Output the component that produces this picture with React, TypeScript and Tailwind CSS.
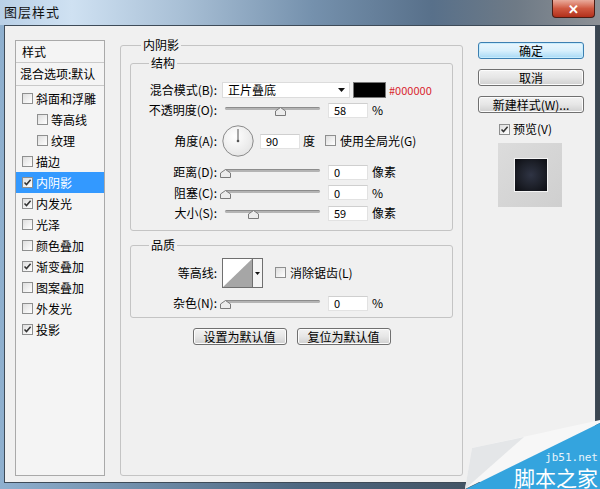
import type { ReactNode } from 'react';

const items = [
  { t: '斜面和浮雕' },
  { t: '等高线', indent: true },
  { t: '纹理', indent: true },
  { t: '描边' },
  { t: '内阴影', on: true, sel: true },
  { t: '内发光', on: true },
  { t: '光泽' },
  { t: '颜色叠加' },
  { t: '渐变叠加', on: true },
  { t: '图案叠加' },
  { t: '外发光' },
  { t: '投影', on: true },
];

function Check({ on }: { on?: boolean }) {
  return (
    <span className="inline-flex h-[11px] w-[11px] shrink-0 items-center justify-center border border-[#8e8f8f] bg-gradient-to-br from-[#dedede] to-white">
      {on && (
        <svg width="9" height="9" viewBox="0 0 9 9">
          <path d="M1.5 4.5 L3.5 6.6 L7.6 1.8" fill="none" stroke="#333" strokeWidth="1.5" />
        </svg>
      )}
    </span>
  );
}

function Label({ children }: { children: ReactNode }) {
  return <span className="w-[86px] shrink-0 text-right">{children}</span>;
}

function NumBox({ v }: { v: string }) {
  return (
    <span className="flex h-[15px] w-[40px] shrink-0 items-center border border-[#e2e2e2] border-t-[#cfcfcf] bg-white pl-[5px] text-[11px]">
      {v}
    </span>
  );
}

function Slider({ pos }: { pos: number }) {
  return (
    <div className="relative ml-[8px] mr-[8px] h-[20px] w-[95px] shrink-0">
      <div className="mt-[7px] h-[3px] rounded-full border-t border-[#8c8c8c] bg-[#b4b4b4]" />
      <svg className="absolute top-[7px]" style={{ left: pos - 5 }} width="11" height="9" viewBox="0 0 11 9">
        <path d="M5.5 0.5 L10.5 4 L10.5 8.5 L0.5 8.5 L0.5 4 Z" fill="#ececec" stroke="#7a7a7a" />
      </svg>
    </div>
  );
}

function SliderRow({ label, pos, v, unit, h }: { label: string; pos: number; v: string; unit: string; h: string }) {
  return (
    <div className={`flex items-center ${h}`}>
      <Label>{label}</Label>
      <Slider pos={pos} />
      <NumBox v={v} />
      <span className="ml-[4px]">{unit}</span>
    </div>
  );
}

function Btn({ children, primary, className }: { children: ReactNode; primary?: boolean; className?: string }) {
  return (
    <div
      className={`flex h-[17px] items-center justify-center rounded-[3px] border text-[12px] leading-none ${
        primary
          ? 'border-[#3c7fb1] bg-gradient-to-b from-[#eaf6fd] via-[#d9f0fc] to-[#a7d9f5] shadow-[inset_0_0_0_1px_#c6ecfd]'
          : 'border-[#707070] bg-gradient-to-b from-[#f2f2f2] via-[#e6e6e6] to-[#d0d0d0] shadow-[inset_0_0_0_1px_#fcfcfc]'
      } ${className ?? ''}`}
    >
      {children}
    </div>
  );
}

export default function App() {
  return (
    <div className="relative flex h-[489px] w-[600px] flex-col overflow-hidden bg-gradient-to-r from-[#8fb0cf] via-[#4d6780] to-[#3a4550] font-['Noto_Sans_CJK_SC',sans-serif] text-[12px] leading-[16px] text-black">
      {/* title bar */}
      <div className="flex h-[25px] shrink-0 items-start justify-between bg-[linear-gradient(90deg,#b9d0e7_0%,#cfe1f2_12%,#a9c0d6_30%,#7591ad_52%,#58708a_72%,#6e7a86_86%,#8d9196_100%)] pl-[4px] pr-[5px]">
        <span className="mt-[4px] text-[13px] tracking-[1px] text-[#111]">图层样式</span>
        <div className="flex h-[18px] w-[43px] items-center justify-center rounded-b-[4px] border border-t-0 border-[#4a1c14] bg-gradient-to-b from-[#e9ab9c] via-[#cf5840] to-[#b22f1a] text-[13px] font-bold leading-none text-white">
          ✕
        </div>
      </div>

      {/* client area */}
      <div className="mx-[4px] h-[458px] shrink-0 border border-[#3e4b58] bg-[#f0f0f0]">
        <div className="flex pl-[10px] pt-[11px]">
          {/* style list */}
          <div className="mt-[3px] h-[436px] w-[90px] shrink-0 border border-[#a9a9a9] bg-[#f4f4f4]">
            <div className="flex h-[22px] items-center border-b border-[#c9c9c9] pl-[6px]">样式</div>
            <div className="flex h-[23px] items-center whitespace-nowrap border-b border-[#c9c9c9] pl-[4px]">混合选项:默认</div>
            <div className="pt-[2px]">
              {items.map((it) => (
                <div
                  key={it.t}
                  className={`flex h-[21px] items-center gap-[3px] ${it.indent ? 'pl-[21px]' : 'pl-[6px]'} ${
                    it.sel ? 'bg-[#3399ff] text-white' : ''
                  }`}
                >
                  <Check on={it.on} />
                  <span>{it.t}</span>
                </div>
              ))}
            </div>
          </div>

          {/* main group */}
          <fieldset className="ml-[15px] h-[439px] w-[343px] shrink-0 rounded-[3px] border border-[#c4c4c4]">
            <legend className="ml-[20px] px-[2px] leading-[16px]">内阴影</legend>
            <div className="pl-[9px]">
              <fieldset className="mt-[2px] h-[176px] w-[323px] rounded-[3px] border border-[#c4c4c4]">
                <legend className="ml-[18px] px-[2px] leading-[16px]">结构</legend>
                <div className="pt-[9px]">
                  <div className="flex h-[20px] items-center">
                    <Label>混合模式(B):</Label>
                    <div className="ml-[5px] flex h-[16px] w-[128px] items-center justify-between border border-[#dcdcdc] bg-white pl-[5px] pr-[4px]">
                      <span>正片叠底</span>
                      <svg width="7" height="4" viewBox="0 0 7 4">
                        <path d="M0 0 L7 0 L3.5 4 Z" fill="#111" />
                      </svg>
                    </div>
                    <span className="ml-[3px] h-[16px] w-[33px] border border-[#777] bg-black" />
                    <span className="ml-[3px] text-[11px] text-[#d9262f]">#000000</span>
                  </div>
                  <SliderRow label="不透明度(O):" pos={55} v="58" unit="%" h="h-[20px]" />
                  <div className="flex h-[42px] items-center">
                    <Label>角度(A):</Label>
                    <svg className="ml-[5px] shrink-0" width="32" height="32" viewBox="0 0 32 32">
                      <defs>
                        <radialGradient id="dial" cx="0.4" cy="0.35" r="0.7">
                          <stop offset="0" stopColor="#ffffff" />
                          <stop offset="1" stopColor="#e4e4e4" />
                        </radialGradient>
                      </defs>
                      <circle cx="16" cy="16" r="15.2" fill="url(#dial)" stroke="#8a8a8a" />
                      <line x1="16" y1="16" x2="16" y2="4" stroke="#555" strokeWidth="1" />
                      <circle cx="16" cy="16" r="1.3" fill="#555" />
                    </svg>
                    <span className="ml-[6px]">
                      <NumBox v="90" />
                    </span>
                    <span className="ml-[3px]">度</span>
                    <span className="ml-[10px]">
                      <Check />
                    </span>
                    <span className="ml-[4px]">使用全局光(G)</span>
                  </div>
                  <SliderRow label="距离(D):" pos={0} v="0" unit="像素" h="h-[20px]" />
                  <SliderRow label="阻塞(C):" pos={0} v="0" unit="%" h="h-[21px]" />
                  <SliderRow label="大小(S):" pos={28} v="59" unit="像素" h="h-[20px]" />
                </div>
              </fieldset>

              <fieldset className="mt-[6px] h-[81px] w-[323px] rounded-[3px] border border-[#c4c4c4]">
                <legend className="ml-[18px] px-[2px] leading-[16px]">品质</legend>
                <div className="mt-[5px] flex h-[30px] items-center">
                  <Label>等高线:</Label>
                  <div className="ml-[5px] flex h-[30px] w-[41px] border border-[#6f6f6f] bg-white">
                    <svg width="29" height="28" viewBox="0 0 29 28">
                      <path d="M0 28 L29 0 L29 28 Z" fill="#a6a6a6" />
                    </svg>
                    <div className="flex w-[10px] items-center justify-center border-l border-[#6f6f6f] bg-[#f4f4f4]">
                      <svg width="5" height="3" viewBox="0 0 5 3">
                        <path d="M0 0 L5 0 L2.5 3 Z" fill="#111" />
                      </svg>
                    </div>
                  </div>
                  <span className="ml-[12px]">
                    <Check />
                  </span>
                  <span className="ml-[4px]">消除锯齿(L)</span>
                </div>
                <div className="mt-[5px]">
                  <SliderRow label="杂色(N):" pos={0} v="0" unit="%" h="h-[20px]" />
                </div>
              </fieldset>
            </div>

            <div className="mt-[10px] flex justify-center gap-[10px]">
              <Btn className="w-[94px]">设置为默认值</Btn>
              <Btn className="w-[94px]">复位为默认值</Btn>
            </div>
          </fieldset>

          {/* right column */}
          <div className="ml-[15px] mt-[5px] flex w-[106px] shrink-0 flex-col">
            <Btn primary>确定</Btn>
            <Btn className="mt-[10px]">取消</Btn>
            <Btn className="mt-[10px]">新建样式(W)...</Btn>
            <div className="mt-[9px] flex h-[14px] items-center pl-[21px]">
              <Check on />
              <span className="ml-[3px]">预览(V)</span>
            </div>
            <div className="ml-[20px] mt-[7px] flex h-[64px] w-[64px] items-center justify-center bg-gradient-to-br from-[#dcdcdc] to-[#cfcfcf]">
              <div className="ml-[2px] h-[32px] w-[32px] bg-[radial-gradient(circle,#2f3444_0%,#1d2029_55%,#0c0d12_100%)] shadow-[0_0_0_1px_#f4f4f4]" />
            </div>
          </div>
        </div>
      </div>

      {/* watermark */}
      <svg className="absolute bottom-0 right-0" width="136" height="70" viewBox="0 0 136 70">
        <path d="M8 29 L136 1 L136 4 L1 70 Z" fill="#f7f7f7" />
        <path d="M8 29 L60 18 L1 70 Z" fill="#e4e6e8" />
        <path d="M2 70 L136 4 L136 70 Z" fill="#34a4de" />
      </svg>
      <div className="absolute bottom-0 right-[2px] flex flex-col items-end text-white">
        <span className="mb-[1px] font-['DejaVu_Sans_Mono',monospace] text-[11px] leading-[12px] text-[#e8f4fb]">jb51.net</span>
        <span className="text-[21px] leading-[24px]">脚本之家</span>
      </div>
    </div>
  );
}
